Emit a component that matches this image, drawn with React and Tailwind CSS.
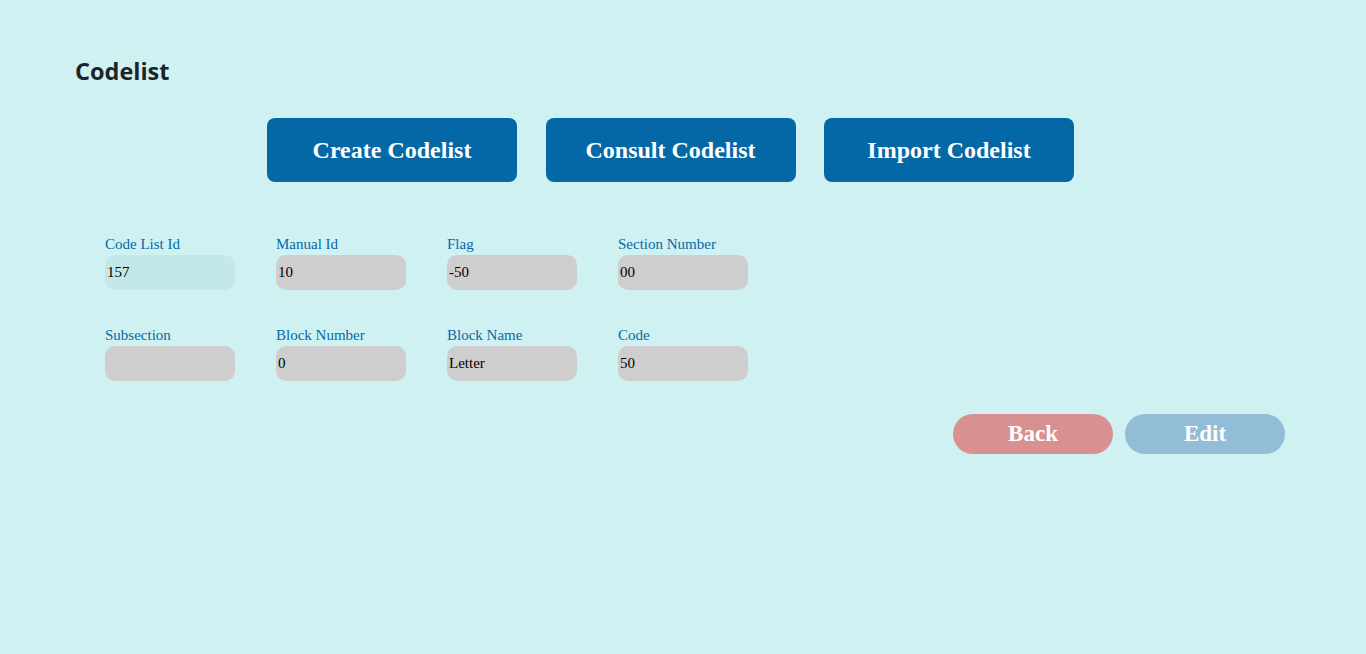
export default function App() {
  const rows = [
    [
      { label: "Code List Id", value: "157", ro: true },
      { label: "Manual Id", value: "10" },
      { label: "Flag", value: "-50" },
      { label: "Section Number", value: "00" },
    ],
    [
      { label: "Subsection", value: "" },
      { label: "Block Number", value: "0" },
      { label: "Block Name", value: "Letter" },
      { label: "Code", value: "50" },
    ],
  ];
  const serif = { fontFamily: '"Liberation Serif", "Times New Roman", serif' };
  return (
    <div className="w-[1366px] h-[654px] bg-[#d0f1f2] overflow-hidden">
      <div className="pl-[75px] pt-[57px]">
        <h1 className="text-[23.5px] font-bold text-[#1c2329] leading-[28px]" style={{ fontFamily: '"Open Sans", "Noto Sans", sans-serif' }}>
          Codelist
        </h1>
      </div>
      <div className="flex gap-[28.5px] pl-[267px] mt-[33px]" style={serif}>
        {["Create Codelist", "Consult Codelist", "Import Codelist"].map((t) => (
          <button key={t} className="w-[250px] h-[64px] rounded-[8px] bg-[#0468a6] text-white text-[24px] font-bold">
            {t}
          </button>
        ))}
      </div>
      <div className="pl-[105px] mt-[53px] flex flex-col gap-[36px]" style={serif}>
        {rows.map((r, i) => (
          <div key={i} className="flex gap-[41px]">
            {r.map((f) => (
              <div key={f.label} className="w-[130px] flex flex-col">
                <label className="text-[15px] leading-[18px] text-[#0468a6] whitespace-nowrap">{f.label}</label>
                <input
                  readOnly
                  value={f.value}
                  className={`mt-[2px] w-[130px] h-[35px] rounded-[10px] px-[2px] text-[15px] text-black outline-none ${f.ro ? "bg-[#c4e7e8]" : "bg-[#cecece]"}`}
                  style={serif}
                />
              </div>
            ))}
          </div>
        ))}
      </div>
      <div className="flex justify-end gap-[12px] pr-[81px] mt-[33px]" style={serif}>
        <button className="w-[160px] h-[40px] rounded-full bg-[#d89090] text-white text-[23px] font-bold">Back</button>
        <button className="w-[160px] h-[40px] rounded-full bg-[#93bcd7] text-white text-[23px] font-bold">Edit</button>
      </div>
    </div>
  );
}
